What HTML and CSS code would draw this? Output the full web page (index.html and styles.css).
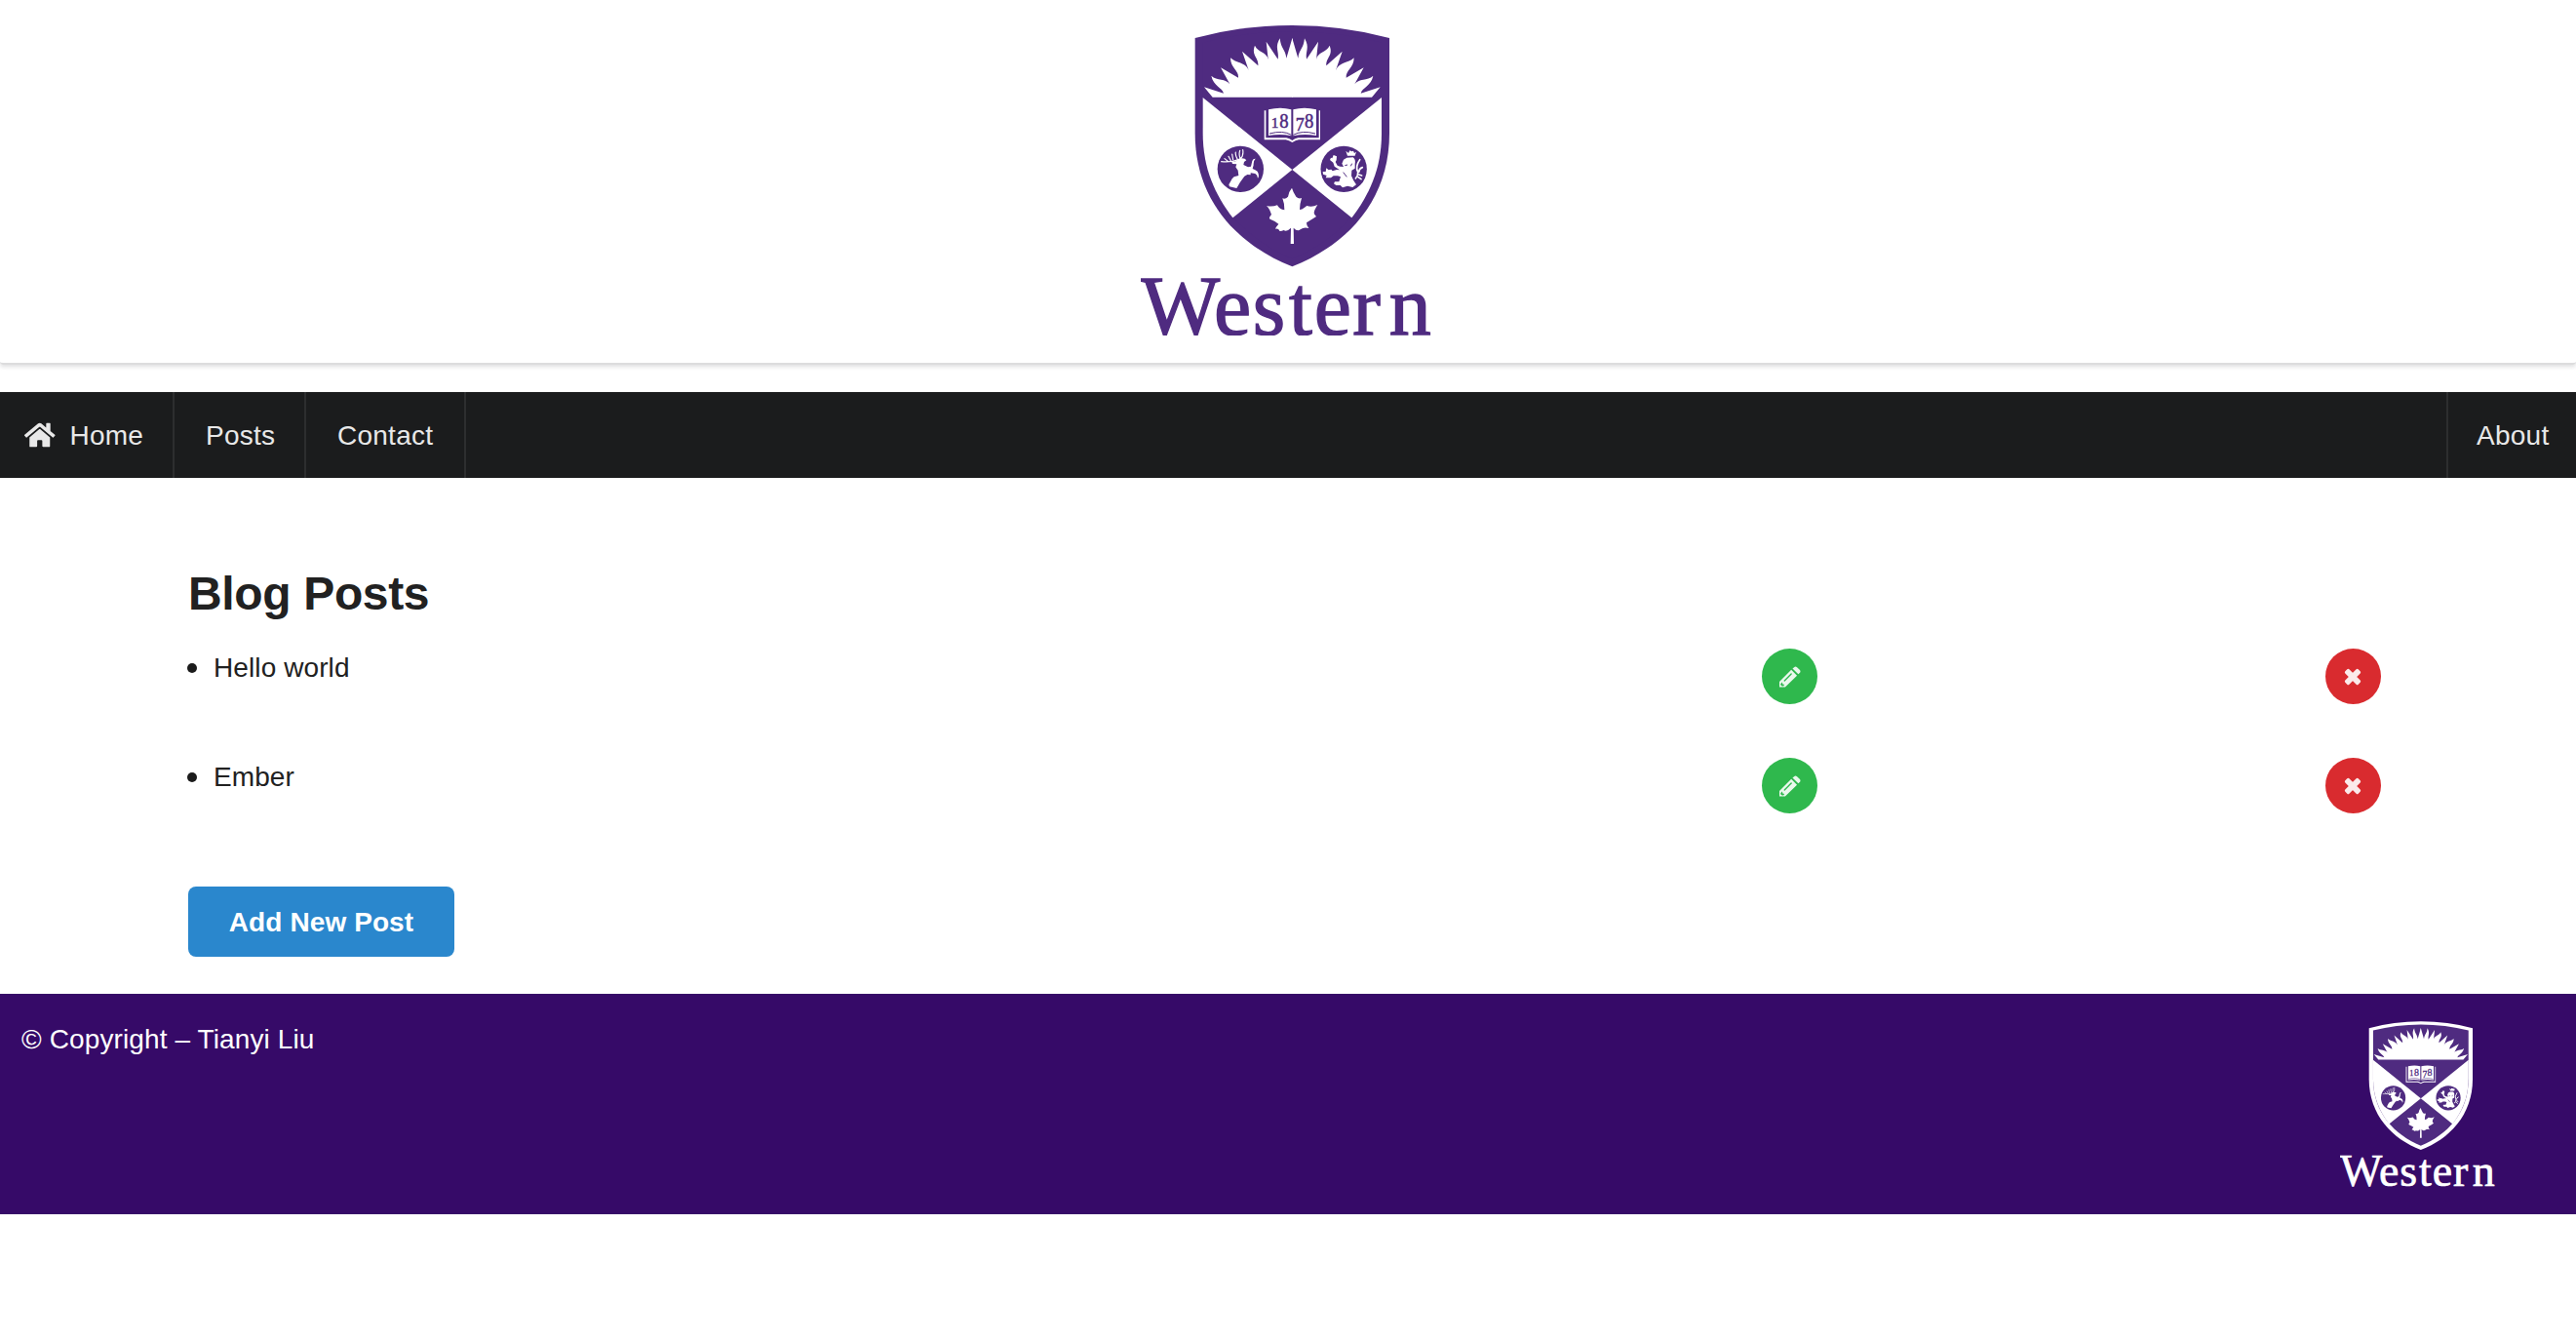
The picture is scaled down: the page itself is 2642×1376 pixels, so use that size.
FILE: index.html
```html
<!DOCTYPE html>
<html lang="en">
<head>
<meta charset="utf-8">
<title>Blog Posts</title>
<link rel="stylesheet" href="styles.css">
</head>
<body>
<svg class="defs" width="0" height="0" aria-hidden="true">
  <defs>
    <path id="sun-half" d="M527 269H281L255 238L315 257C310 238 284 236 277 203C294 219 322 210 334 229L306 178L360 209C362 186 336 180 336 148C354 166 382 160 392 186L372 128L421 172C423 146 399 142 411 110C421 132 449 130 452 153L446 98L482 152C486 126 471 118 488 88C491 120 505 122 508 149L526 88L527 90Z"/>
    <symbol id="crest" viewBox="60 48 900 954">
      <path class="crest-edge" d="M227 87Q370 48 526 48T825 87V380C825 590 690 725 526 790C362 725 227 590 227 380Z"/>
      <path fill="#4f2b80" d="M251 101Q385 67 526 67T801 101V380C801 575 680 700 526 766C372 700 251 575 251 380Z"/>
      <g fill="#fff">
        <use href="#sun-half"/>
        <use href="#sun-half" transform="translate(1052) scale(-1 1)"/>
        <path d="M251 270L526 492L343 640C290 570 251 490 251 380Z"/>
        <path d="M801 270L526 492L709 640C762 570 801 490 801 380Z"/>
        <!-- open book -->
        <path d="M453 307Q490 298 523 307V388Q490 380 453 387ZM600 307Q563 298 529 307V388Q563 380 600 387Z"/>
        <path d="M440 310H445V394H508Q518 396 526 402Q534 396 544 394H608V310H612V400H546Q536 402 526 408Q516 402 506 400H440Z"/>
        <!-- maple leaf -->
        <path d="M525 548Q529 562 538 575Q546 583 555 579Q549 597 549 615Q556 615 563 609Q567 606 571 603Q587 608 604 600Q594 615 593 625Q594 632 600 636Q586 645 570 655Q569 662 577 672Q562 667 551 676Q542 683 530 671L531 720H521L522 671Q509 684 500 678Q490 682 487 680Q484 672 474 674Q476 668 484 659Q474 650 458 644Q452 641 462 630Q456 611 447 603Q464 607 480 601Q487 615 502 616Q503 598 496 580Q505 584 513 575Q516 558 525 548Z"/>
      </g>
      <path fill="none" stroke="#4f2b80" stroke-width="3" d="M456 381Q498 370 523 385M597 381Q556 370 529 385"/>
      <g class="crest-year">
        <text x="461" y="362" font-size="46">1</text>
        <text x="487" y="362" font-size="61" textLength="28" lengthAdjust="spacingAndGlyphs">8</text>
        <text x="536" y="371" font-size="56" textLength="27" lengthAdjust="spacingAndGlyphs">7</text>
        <text x="564" y="362" font-size="61" textLength="28" lengthAdjust="spacingAndGlyphs">8</text>
      </g>
      <circle cx="367" cy="490" r="71" fill="#4f2b80"/>
      <circle cx="684.500" cy="490" r="71" fill="#4f2b80"/>
      <!-- stag -->
      <path fill="#fff" d="M340 468L352 466L366 456L380 458L385 463L378 468L376 477L390 484L399 482L403 465Q406 457 413 458Q406 464 407 478L404 489L412 493Q421 497 421 502Q425 513 420 518Q419 508 412 504L398 502L398 508L388 507L379 512L366 530L355 549L333 544L331 538L341 520L347 514L361 510L359 494L352 484L355 475L342 474Z"/>
      <path fill="none" stroke="#fff" stroke-width="3.500" stroke-linecap="round" d="M308 467Q340 470 366 459Q377 450 374 431M318 458L329 467M330 451L338 466M341 444L344 462M352 438Q350 448 358 461M365 433Q361 446 366 458"/>
      <!-- lion -->
      <path fill="#fff" d="M691 434L699 441L703 433L709 436L714 434L717 441L723 437L719 449H696ZM694 455L713 454Q722 461 719 474L719 488L709 494L708 511L715 526L723 538L712 546L696 542L681 547L674 540L661 540L654 535L657 529L670 529L675 514L666 511L653 511L645 517H629L632 510L621 506L620 498L629 498L631 487L638 493L646 491L650 496L663 492L672 493L656 482L652 470L642 462L645 455L649 457L653 447L663 451L662 463L659 468L665 479L673 482L684 483L679 473L684 461Z"/>
      <path fill="none" stroke="#fff" stroke-width="5" stroke-linecap="round" d="M734 461Q719 482 728 499Q729 510 721 519M742 485Q732 488 731 499M740 510L731 507M738 521L729 515"/>
      <path fill="none" stroke="#4f2b80" stroke-width="3" d="M688 479L696 477M683 500L694 514M710 473L706 481"/>
      <text class="crest-name" x="60 285 404 516 593 712 824" y="999">Western</text>
    </symbol>
    <symbol id="pencil" viewBox="105 127 67 66">
      <path fill-rule="evenodd" d="M105 192V175L142 138L160 156L123 192ZM109 181A6 6 0 0 0 118 188L121 184L115 183L114 177Z"/>
      <path d="M146 134L151 130Q155 126 160 130L169 139Q172 143 169 147L164 152Z"/>
      <path class="pencil-slot" d="M121 172L142 151"/>
    </symbol>
    <symbol id="cross" viewBox="-10 -10 20 20">
      <rect x="-9.500" y="-2.900" width="19" height="5.800" rx="1.500" transform="rotate(45)"/>
      <rect x="-9.500" y="-2.900" width="19" height="5.800" rx="1.500" transform="rotate(-45)"/>
    </symbol>
  </defs>
</svg>

<header class="banner">
  <svg class="banner-logo" role="img" aria-label="Western"><use href="#crest"/></svg>
</header>

<nav class="menu">
  <a class="item home">
    <svg class="home-icon" viewBox="0 0 576 512"><path d="M280.370 148.260L96 300.110V464a16 16 0 0 0 16 16l112.060-.29a16 16 0 0 0 15.920-16V368a16 16 0 0 1 16-16h64a16 16 0 0 1 16 16v95.640a16 16 0 0 0 16 16.050L464 480a16 16 0 0 0 16-16V300L295.670 148.260a12.190 12.190 0 0 0-15.300 0zM571.600 251.470L488 182.560V44.050a12 12 0 0 0-12-12h-56a12 12 0 0 0-12 12v72.610L318.470 43a48 48 0 0 0-61 0L4.340 251.470a12 12 0 0 0-1.600 16.900l25.500 31A12 12 0 0 0 45.150 301l235.220-193.740a12.190 12.190 0 0 1 15.300 0L530.900 301a12 12 0 0 0 16.900-1.600l25.500-31a12 12 0 0 0-1.700-16.930z"/></svg>
    Home
  </a>
  <a class="item posts">Posts</a>
  <a class="item contact">Contact</a>
  <a class="item about">About</a>
</nav>

<main class="content">
  <h2 class="title">Blog Posts</h2>
  <ul class="post-list">
    <li class="post">
      <span class="post-name">Hello world</span>
      <button class="circle edit" aria-label="Edit"><svg class="edit-icon"><use href="#pencil"/></svg></button>
      <button class="circle delete" aria-label="Delete"><svg class="delete-icon"><use href="#cross"/></svg></button>
    </li>
    <li class="post">
      <span class="post-name">Ember</span>
      <button class="circle edit" aria-label="Edit"><svg class="edit-icon"><use href="#pencil"/></svg></button>
      <button class="circle delete" aria-label="Delete"><svg class="delete-icon"><use href="#cross"/></svg></button>
    </li>
  </ul>
  <button class="add">Add New Post</button>
</main>

<footer class="footer">
  <p class="copyright">© Copyright – Tianyi Liu</p>
  <svg class="footer-logo" role="img" aria-label="Western"><use href="#crest"/></svg>
</footer>
</body>
</html>
```
FILE: styles.css
```css
* {
  box-sizing: border-box;
}

body {
  margin: 0;
  background: #fff;
  color: #212121;
  font: 28px/40px "Liberation Sans", Arial, sans-serif;
}

.defs {
  display: block;
}

.banner {
  height: 374px;
  padding-top: 26px;
  border-bottom: 2px solid #dcdcdd;
  border-radius: 0 0 3px 3px;
  box-shadow: 0 2px 4px rgba(34, 36, 38, 0.15);
}

.banner-logo {
  display: block;
  width: 300px;
  height: 318px;
  margin-left: 1170px;
  color: #4f2b80;
}

.crest-edge {
  fill: currentColor;
}

.crest-year {
  fill: #4f2b80;
  stroke: #4f2b80;
  stroke-width: 1.5;
  font-family: "Liberation Serif", serif;
}

.crest-name {
  fill: currentColor;
  stroke: currentColor;
  stroke-width: 4;
  font-family: "Liberation Serif", serif;
  font-size: 258px;
}

.menu {
  display: flex;
  height: 88px;
  margin-top: 28px;
  background: #1b1c1d;
  color: #e8e8e8;
  letter-spacing: 0.25px;
}

.item {
  display: flex;
  align-items: center;
  padding-top: 1px;
  padding-left: 32px;
  border-right: 2px solid #2d2e2f;
}

.home {
  width: 179px;
  padding-left: 25px;
  gap: 15px;
}

.home-icon {
  width: 31.5px;
  height: 28px;
  margin-top: -1px;
  fill: currentColor;
}

.posts {
  width: 135px;
}

.contact {
  width: 164px;
}

.about {
  width: 133px;
  margin-left: auto;
  padding-left: 29px;
  border-right: 0;
  border-left: 2px solid #2d2e2f;
}

.content {
  padding: 88px 193px 0;
}

.title {
  margin: 0;
  font-size: 48px;
  line-height: 62px;
  letter-spacing: -0.35px;
}

.post-list {
  margin: 25px 0 0;
  padding: 0;
  list-style: none;
}

.post {
  display: grid;
  grid-template-columns: 1614px 578px 57px;
  align-items: start;
  height: 112px;
}

.post-name {
  display: flex;
  align-items: center;
  gap: 17px;
  margin-left: -1px;
  letter-spacing: 0.1px;
}

.post-name::before {
  content: "";
  width: 10px;
  height: 10px;
  border-radius: 50%;
  background: #1b1b1b;
}

.circle {
  display: flex;
  align-items: center;
  justify-content: center;
  width: 57px;
  height: 57px;
  padding: 0;
  border: 0;
  border-radius: 50%;
}

.edit {
  background: #2fb84d;
  fill: #eaf8ed;
}

.edit-icon {
  width: 22px;
  height: 22px;
  margin-left: 1px;
}

.pencil-slot {
  stroke: #2fb84d;
  stroke-width: 4;
  stroke-linecap: round;
}

.delete {
  background: #d92b2f;
  fill: #fbeaea;
}

.delete-icon {
  width: 20px;
  height: 20px;
  margin-left: -1px;
}

.add {
  display: block;
  width: 273px;
  height: 72px;
  margin-top: 20px;
  padding: 1px 0 0;
  border: 0;
  border-radius: 8px;
  background: #2a87cd;
  color: #fff;
  font: bold 28px/40px "Liberation Sans", Arial, sans-serif;
  letter-spacing: 0.1px;
}

.footer {
  display: flex;
  justify-content: space-between;
  height: 226px;
  margin-top: 38px;
  padding: 28px 82px 0 22px;
  background: #360a68;
  color: #fff;
}

.copyright {
  margin: -1px 0 0;
  letter-spacing: 0.12px;
}

.footer-logo {
  width: 160px;
  height: 170px;
}
```
